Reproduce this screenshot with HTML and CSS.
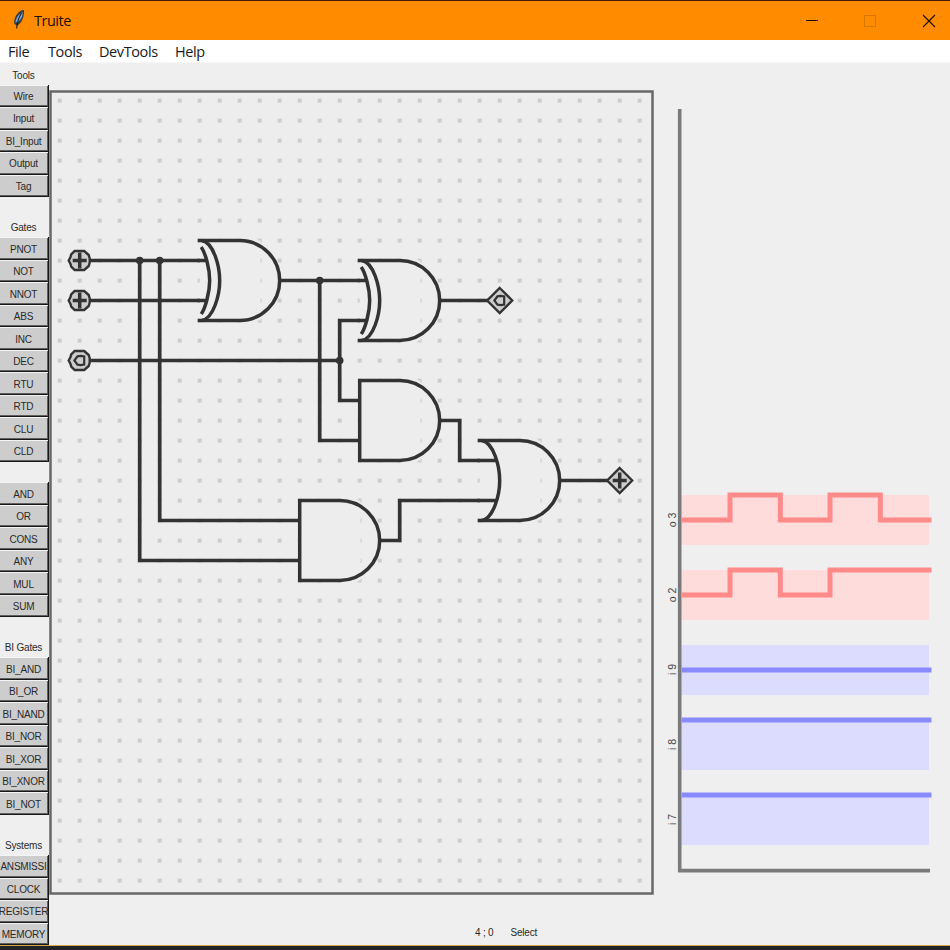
FILE: index.html
```
<!DOCTYPE html>
<html lang="en">
<head>
<meta charset="utf-8">
<title>Truite</title>
<link rel="stylesheet" href="styles.css">
</head>
<body>
<div class="window">
  <header class="titlebar">
    <svg class="feather" width="14" height="22" viewBox="0 0 14 22">
      <path d="M12 1 C7 1 2 7 2 14 L4.500 17 C9 15 12.500 9 12 1Z" fill="#3c4043"/>
      <path d="M10.500 3 C6 6 4 9 3.500 13.500 C8 12.500 11 8 10.500 3Z" fill="#78aee6"/>
      <path d="M9.500 4 C7 8 5 12 4.700 19.500" fill="none" stroke="#1d1a18" stroke-width="1.100"/>
    </svg>
    <span class="title">Truite</span>
    <svg class="controls" width="130" height="14" viewBox="0 0 130 14">
      <path d="M0 6.500H12" stroke="#1c0d00"/>
      <rect x="58.500" y="1.500" width="11" height="11" fill="none" stroke="#d87800"/>
      <path d="M117 1L129 13M129 1L117 13" stroke="#1c0d00" stroke-width="1.200"/>
    </svg>
  </header>
  <nav class="menu"><span class="m-file">File</span><span class="m-tools">Tools</span><span class="m-dev">DevTools</span><span class="m-help">Help</span></nav>
  <main class="work">
    <aside class="palette">
      <h2>Tools</h2>
      <div class="group"><button>Wire</button><button>Input</button><button>BI_Input</button><button>Output</button><button>Tag</button></div>
      <h2 class="spaced">Gates</h2>
      <div class="group"><button>PNOT</button><button>NOT</button><button>NNOT</button><button>ABS</button><button>INC</button><button>DEC</button><button>RTU</button><button>RTD</button><button>CLU</button><button>CLD</button></div>
      <div class="group gap"><button>AND</button><button>OR</button><button>CONS</button><button>ANY</button><button>MUL</button><button>SUM</button></div>
      <h2 class="spaced">BI Gates</h2>
      <div class="group"><button>BI_AND</button><button>BI_OR</button><button>BI_NAND</button><button>BI_NOR</button><button>BI_XOR</button><button>BI_XNOR</button><button>BI_NOT</button></div>
      <h2 class="spaced">Systems</h2>
      <div class="group"><button>ANSMISSI</button><button>CLOCK</button><button>REGISTER</button><button>MEMORY</button></div>
    </aside>
    <section class="editor">
      <svg class="board" width="605" height="805" viewBox="49 90 605 805">
        <defs>
          <pattern id="dots" x="49.700" y="90.600" width="20" height="20" patternUnits="userSpaceOnUse"><rect x="8" y="8" width="4" height="4" fill="#cdcdcd"/></pattern>
          <g id="and">
            <rect x="0" y="0" width="60.800" height="80" class="cover"/>
            <path d="M0 0H40A40 40 0 0 1 40 80H0Z" class="outline"/>
          </g>
          <g id="or">
            <rect x="0" y="0" width="60.800" height="80" class="cover"/>
            <path d="M-2 0H40A40 40 0 0 1 40 80H-2" class="outline"/>
            <path d="M2 0C14 2 20 26 20 40C20 54 14 78 2 80" class="outline"/>
          </g>
          <g id="xor">
            <use href="#or"/>
            <path d="M1.500 6.500C5.500 12 10 28 10 40C10 52 5.500 68 1.500 73.500" class="outline"/>
          </g>
          <path id="plus" d="M-7 0H7M0 -8V8" class="outline"/>
          <path id="ring" d="M-5.300 0L-2.200 -4.200L1 -4.700L4.500 -4V4L1 4.700L-2.200 4.200Z" class="thin"/>
          <path id="node" d="M-11 0L-9.200 -3.500L-8.500 -6L-5 -9.500H4.500L9 -5.500L10 -2V2L9 5.500L4.500 9.500H-5L-8.500 6L-9.200 3.500Z" class="pin"/>
          <path id="diamond" d="M0 -12.500L12.500 0L0 12.500L-12.500 0Z" class="pin"/>
        </defs>
        <rect x="50.500" y="91.500" width="602" height="802" class="frame"/>
        <rect x="53" y="94" width="597" height="797" fill="url(#dots)"/>
        <g transform="translate(-.3 .5)">
          <path class="wire" d="M80 260H208M80 300H208M80 360H340M140 260V560H300M160 260V520H300M280 280H368M320 280V440H360M368 320H340V400H360M440 300H490M440 420H460V460H497M380 540H400V500H497M560 480H608"/>
          <use href="#xor" x="200" y="240"/>
          <use href="#xor" x="360" y="260"/>
          <use href="#and" x="360" y="380"/>
          <use href="#and" x="300" y="500"/>
          <use href="#or" x="480" y="440"/>
          <path class="wire" d="M198 260H207M198 300H207M358 280H367M358 320H367M478 460H497M478 500H497"/>
          <circle cx="140" cy="260" r="3.800" class="joint"/><circle cx="160" cy="260" r="3.800" class="joint"/>
          <circle cx="320" cy="280" r="3.800" class="joint"/><circle cx="340" cy="360" r="3.800" class="joint"/>
          <use href="#node" x="80" y="260"/><use href="#plus" x="80" y="260"/>
          <use href="#node" x="80" y="300"/><use href="#plus" x="80" y="300"/>
          <use href="#node" x="80" y="360"/><use href="#ring" x="80" y="360"/>
          <use href="#diamond" x="500" y="300"/><use href="#ring" x="500" y="300"/>
          <use href="#diamond" x="620" y="480"/><use href="#plus" x="620" y="480"/>
        </g>
      </svg>
      <footer class="status"><span>4 ; 0</span><span>Select</span></footer>
    </section>
    <svg class="scope" width="296" height="882" viewBox="654 63 296 882">
      <g fill="#ffdcdc"><rect x="681" y="495" width="248" height="50"/><rect x="681" y="570" width="248" height="50"/></g>
      <g fill="#dcdcff"><rect x="681" y="645" width="248" height="50"/><rect x="681" y="720" width="248" height="50"/><rect x="681" y="795" width="248" height="50"/></g>
      <path class="axis" d="M679.700 109V870.600H930"/>
      <path class="high" d="M681.500 520H730V495H780.300V520H830V495H880.300V520H931.500M681.500 595H730V570H780.300V595H830V570H931.500"/>
      <path class="low" d="M681.500 670H931.500M681.500 720H931.500M681.500 795H931.500"/>
      <g class="names">
        <text transform="translate(676 520) rotate(-90)">o 3</text>
        <text transform="translate(676 595) rotate(-90)">o 2</text>
        <text transform="translate(676 669.500) rotate(-90)">i 9</text>
        <text transform="translate(676 744.500) rotate(-90)">i 8</text>
        <text transform="translate(676 819.500) rotate(-90)">i 7</text>
      </g>
    </svg>
  </main>
</div>
</body>
</html>
```
FILE: styles.css
```
* { box-sizing: border-box; }
body { margin: 0; background: #efefef; }
.window {
  width: 950px;
  height: 950px;
  display: flex;
  flex-direction: column;
  overflow: hidden;
  border-bottom: 4px solid #222325;
}
.titlebar {
  height: 40px;
  flex: none;
  display: flex;
  align-items: center;
  padding: 0 14px 0 12px;
  background: #ff8c00;
  border-top: 1px solid #4a1a08;
  font: 14.5px "Open Sans", sans-serif;
  color: #1c0d00;
}
.feather { margin-top: -1px; }
.title { margin: -1px 0 0 8px; letter-spacing: -.5px; }
.controls { margin-left: auto; }
.menu {
  height: 23px;
  flex: none;
  display: flex;
  align-items: center;
  padding: 1px 0 0 8px;
  background: #fff;
  border-bottom: 1px solid #f6f6f6;
  font: 14.5px "Open Sans", sans-serif;
  letter-spacing: -.4px;
  color: #1c1820;
  white-space: nowrap;
}
.m-file { width: 40px; }
.m-tools { width: 51px; }
.m-dev { width: 76px; }
.work {
  flex: 1;
  min-height: 0;
  display: flex;
  border-bottom: 1px solid #d9a550;
}
.palette {
  width: 49px;
  flex: none;
  font: 10px "Liberation Sans", sans-serif;
  letter-spacing: -.2px;
  color: #2a2a2a;
}
.palette h2 {
  margin: 0;
  height: 21.7px;
  padding: 1px 2px 0 0;
  font-size: 10px;
  font-weight: normal;
  line-height: 23px;
  letter-spacing: -.2px;
  text-align: center;
}
.palette h2.spaced { height: 40.1px; padding-top: 19px; }
.group { display: flex; flex-direction: column; }
.group.gap { margin-top: 20.1px; }
.group button {
  display: flex;
  align-items: center;
  justify-content: center;
  width: 49px;
  height: 22.5px;
  margin: 0;
  padding: 2px 1px 0 0;
  border: 0 solid #181818;
  border-width: 0 1px 1px 0;
  box-shadow: inset 0 1px #f4f4f4, inset -1px -1px #606060;
  background: #cdcdcd;
  font: inherit;
  letter-spacing: inherit;
  color: inherit;
  overflow: hidden;
  white-space: nowrap;
}
.editor {
  width: 605px;
  flex: none;
  padding-top: 27px;
}
.board, .scope { display: block; flex: none; }
.cover { fill: #ededed; }
.outline { fill: none; stroke: #333; stroke-width: 3.5; }
.thin { fill: none; stroke: #333; stroke-width: 2.2; }
.pin { fill: #cdcdcd; stroke: #333; stroke-width: 2.4; }
.wire { fill: none; stroke: #333; stroke-width: 3.7; }
.joint { fill: #333; }
.frame { fill: #ededed; stroke: #686868; stroke-width: 2.5; }
.status {
  display: flex;
  gap: 17px;
  padding: 32px 0 0 426px;
  font: 10px/12px "Liberation Sans", sans-serif;
  letter-spacing: -.2px;
  color: #2a2a2a;
}
.axis { fill: none; stroke: #7a7a7a; stroke-width: 3.6; }
.high { fill: none; stroke: #ff8a8a; stroke-width: 5; }
.low { fill: none; stroke: #8a8aff; stroke-width: 5; }
.names { font: 10.5px "Liberation Sans", sans-serif; fill: #444; text-anchor: middle; }
```
